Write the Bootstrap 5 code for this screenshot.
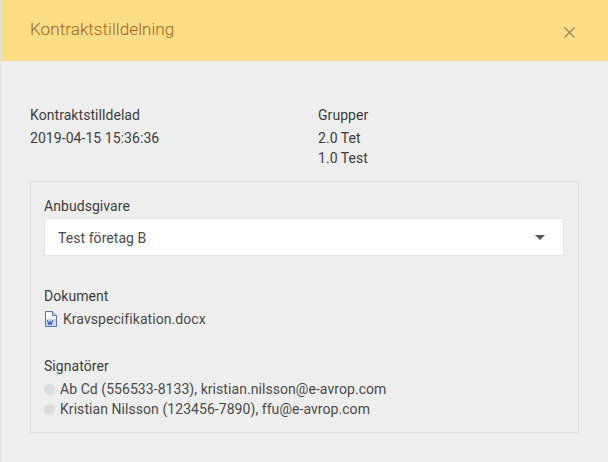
<!DOCTYPE html>
<html lang="sv">
<head>
<meta charset="utf-8">
<title>Kontraktstilldelning</title>
<link href="https://cdn.jsdelivr.net/npm/bootstrap@5.3.0/dist/css/bootstrap.min.css" rel="stylesheet">
<style>
html, body { height: 100%; }
body { background: #eeeeee; color: #3d3d3d; font-family: Roboto, "Noto Sans", sans-serif; font-size: 14px; line-height: 20px; letter-spacing: .06px; overflow: hidden; border-left: 1px solid #e0e0e0; }
.head-bar { background: #ffdd87; height: 61px; margin-left: -1px; padding: 0 30px; }
.head-title { color: #a4621a; font-size: 17.200px; line-height: 24px; margin: 0 0 3px; font-weight: 300; letter-spacing: 0; }
.close-x { width: 11px; height: 11px; display: block; margin-right: 3px; margin-top: 3px; }
.sheet { padding: 44px 29px 0; }
.info-col { width: 288px; }
.info-label { margin-bottom: 3px; }
.frame { border: 1px solid #dddddd; margin-top: 13px; height: 252px; padding: 14px 13px; }
.pick-box { background: #fff; border: 1px solid #e4e4e4; height: 38px; width: 520px; margin-top: 2px; padding: 2px 13px 0; color: #4a4a4a; }
.caret-tri { width: 0; height: 0; border-left: 5px solid transparent; border-right: 5px solid transparent; border-top: 5px solid #555; margin-right: 5px; margin-bottom: 2px; }
.doc-name { color: #4a4a4a; margin-top: 3px; }
.sign-dot { width: 11px; height: 11px; border-radius: 50%; background: #dcdcdc; margin-right: 5px; flex: none; }
.sign-row { color: #4a4a4a; }
.sign-first { margin-top: 3px; }
.doc-head { margin-top: 30px; }
.sign-head { margin-top: 27px; }
.doc-ico { margin-right: 5px; }
</style>
</head>
<body>
<div class="head-bar d-flex align-items-center justify-content-between">
  <h1 class="head-title">Kontraktstilldelning</h1>
  <svg class="close-x" viewBox="0 0 11 11" aria-label="Stäng"><path d="M.5.5l10 10M10.500.5l-10 10" stroke="#8f7f52" stroke-width="1.100" fill="none"/></svg>
</div>
<div class="sheet">
  <div class="d-flex">
    <div class="info-col">
      <div class="info-label">Kontraktstilldelad</div>
      <div>2019-04-15 15:36:36</div>
    </div>
    <div>
      <div class="info-label">Grupper</div>
      <div>2.0 Tet</div>
      <div>1.0 Test</div>
    </div>
  </div>
  <div class="frame">
    <div>Anbudsgivare</div>
    <div class="pick-box d-flex align-items-center justify-content-between">
      <span>Test företag B</span>
      <span class="caret-tri"></span>
    </div>
    <div class="doc-head">Dokument</div>
    <div class="d-flex align-items-center doc-name">
      <svg class="doc-ico" width="14" height="16" viewBox="0 0 14 16"><path d="M1.500.5h7l4 4v11h-11z" fill="#f4f7fc" stroke="#5a74b8"/><path d="M8.500.5v4h4" fill="#dfe6f5" stroke="#5a74b8"/><rect x="2" y="8" width="10" height="7" fill="#c9d6f0"/><path d="M3.500 9l1.300 5 1.200-3.500L7.200 14l1.300-5" fill="none" stroke="#2b57b0" stroke-width="1"/></svg>
      <span>Kravspecifikation.docx</span>
    </div>
    <div class="sign-head">Signatörer</div>
    <div class="sign-row sign-first d-flex align-items-center"><span class="sign-dot"></span>Ab Cd (556533-8133), kristian.nilsson@e-avrop.com</div>
    <div class="sign-row d-flex align-items-center"><span class="sign-dot"></span>Kristian Nilsson (123456-7890), ffu@e-avrop.com</div>
  </div>
</div>
<script src="https://cdn.jsdelivr.net/npm/bootstrap@5.3.0/dist/js/bootstrap.bundle.min.js"></script>
</body>
</html>
